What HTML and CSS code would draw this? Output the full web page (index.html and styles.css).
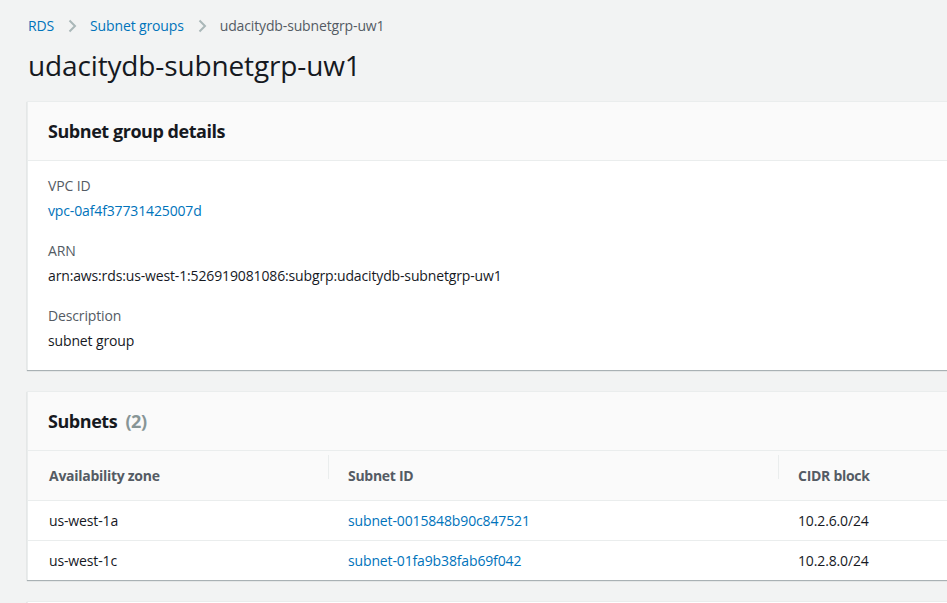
FILE: index.html
```html
<!DOCTYPE html>
<html>
<head>
<meta charset="utf-8">
<link rel="stylesheet" href="styles.css">
</head>
<body>
<div class="page">
  <nav class="crumbs">
    <a class="link">RDS</a>
    <svg class="chev" width="16" height="16" viewBox="0 0 16 16"><path d="M5.5 2.5 L11 8 L5.5 13.5" fill="none" stroke="#aab7b8" stroke-width="2"/></svg>
    <a class="link">Subnet groups</a>
    <svg class="chev" width="16" height="16" viewBox="0 0 16 16"><path d="M5.5 2.5 L11 8 L5.5 13.5" fill="none" stroke="#aab7b8" stroke-width="2"/></svg>
    <span class="current">udacitydb-subnetgrp-uw1</span>
  </nav>
  <h1 class="title">udacitydb-subnetgrp-uw1</h1>

  <section class="card">
    <header class="card-head"><h2>Subnet group details</h2></header>
    <div class="card-body">
      <div class="field">
        <div class="label">VPC ID</div>
        <div class="value link">vpc-0af4f37731425007d</div>
      </div>
      <div class="field">
        <div class="label">ARN</div>
        <div class="value">arn:aws:rds:us-west-1:526919081086:subgrp:udacitydb-subnetgrp-uw1</div>
      </div>
      <div class="field">
        <div class="label">Description</div>
        <div class="value">subnet group</div>
      </div>
    </div>
  </section>

  <section class="card">
    <header class="card-head"><h2>Subnets <span class="count">(2)</span></h2></header>
    <div class="table">
      <div class="row thead">
        <div class="cell c1">Availability zone</div>
        <div class="cell c2"><span class="sep"></span>Subnet ID</div>
        <div class="cell c3"><span class="sep"></span>CIDR block</div>
      </div>
      <div class="row">
        <div class="cell c1">us-west-1a</div>
        <div class="cell c2 link">subnet-0015848b90c847521</div>
        <div class="cell c3">10.2.6.0/24</div>
      </div>
      <div class="row">
        <div class="cell c1">us-west-1c</div>
        <div class="cell c2 link">subnet-01fa9b38fab69f042</div>
        <div class="cell c3">10.2.8.0/24</div>
      </div>
    </div>
  </section>

  <section class="card stub"></section>
</div>
</body>
</html>
```

FILE: styles.css
```css
html, body {
  margin: 0;
  padding: 0;
  background: #f2f3f3;
  overflow: hidden;
  height: 603px;
}
body {
  font-family: "Open Sans", "Noto Sans", sans-serif;
  font-size: 14px;
  color: #16191f;
  letter-spacing: -0.01em;
}
.page {
  padding: 0 0 0 27px;
  width: 1000px;
}
.link {
  color: #0073bb;
  text-decoration: none;
}
.crumbs {
  display: flex;
  align-items: center;
  gap: 10px;
  height: 20px;
  padding-top: 16px;
  padding-left: 1px;
  line-height: 20px;
}
.current {
  color: #545b64;
}
.title {
  margin: 0;
  padding: 9px 0 0 1px;
  font-size: 28px;
  font-weight: 400;
  line-height: 40px;
  height: 46px;
  color: #16191f;
  letter-spacing: -0.005em;
}
.card {
  background: #ffffff;
  border-top: 1px solid #eaeded;
  border-left: 1px solid #eaeded;
  box-shadow: 0 1px 1px 0 rgba(0, 28, 36, 0.3);
  margin-top: 10px;
  margin-bottom: 21px;
}
.card-head {
  background: #fafafa;
  border-bottom: 1px solid #eaeded;
  height: 58px;
  display: flex;
  align-items: center;
  padding: 0 20px;
}
.card-head h2 {
  margin: 0;
  font-size: 18px;
  font-weight: 700;
  line-height: 24px;
  letter-spacing: -0.025em;
}
.count {
  color: #879596;
  font-weight: 700;
  margin-left: 4px;
}
.card-body {
  padding: 15px 20px 19px;
  display: flex;
  flex-direction: column;
  gap: 20px;
}
.field {
  display: flex;
  flex-direction: column;
  gap: 5px;
  line-height: 20px;
}
.label {
  color: #545b64;
}
.row {
  display: flex;
  height: 39px;
  align-items: center;
  border-bottom: 1px solid #eaeded;
}
.row:last-child {
  border-bottom: none;
}
.thead {
  background: #fafafa;
  height: 49px;
  font-weight: 700;
  color: #545b64;
  letter-spacing: -0.02em;
}
.cell {
  position: relative;
  padding-left: 20px;
  box-sizing: border-box;
}
.c1 { width: 300px; padding-left: 21px; }
.c2 { width: 450px; }
.c3 { flex: 1; }
.sep {
  position: absolute;
  left: 0;
  top: -11px;
  height: 24px;
  width: 1px;
  background: #eaeded;
}
.stub {
  height: 40px;
  margin-top: 0;
}
```
